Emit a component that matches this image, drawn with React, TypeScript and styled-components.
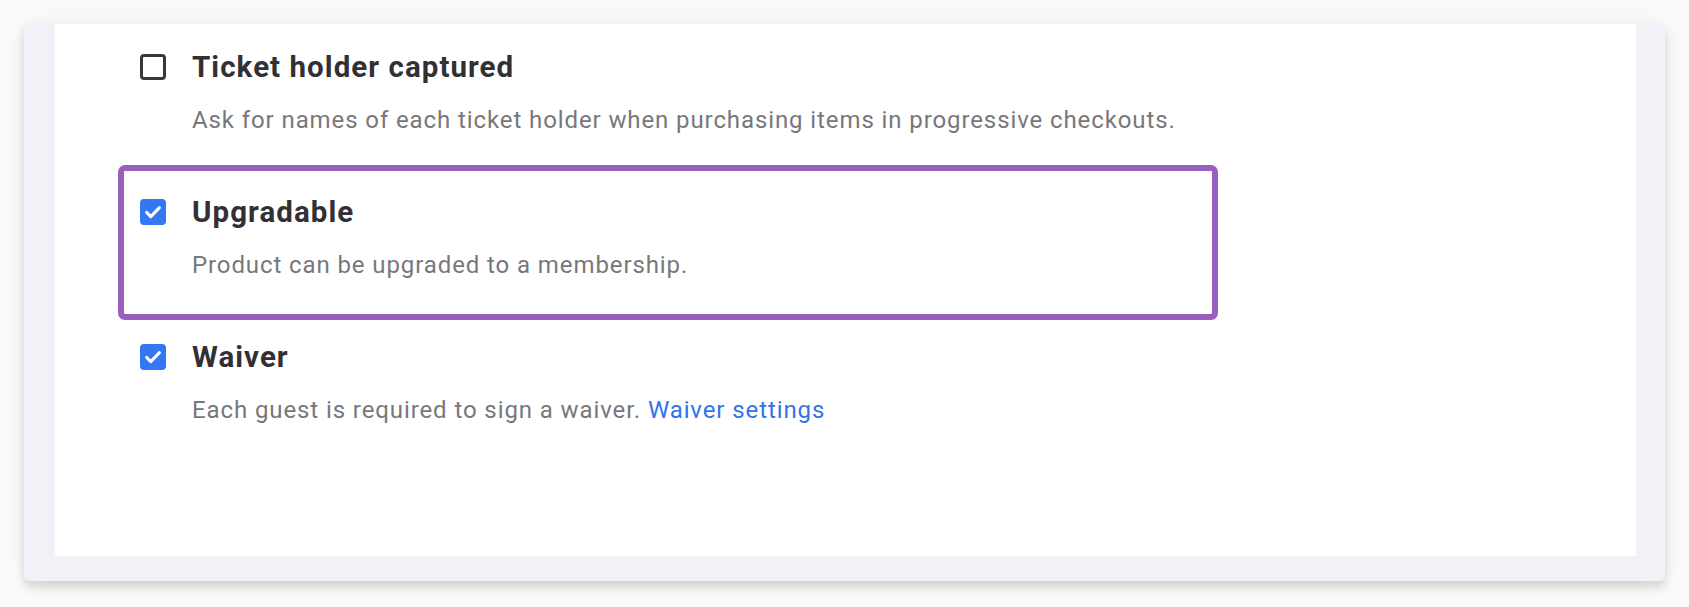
import React from "react";
import styled, { createGlobalStyle } from "styled-components";

const GlobalStyle = createGlobalStyle`
  html, body {
    margin: 0;
    padding: 0;
    background: #fafafa;
  }
  body {
    padding: 24px;
    font-family: Roboto, "Noto Sans", Arial, sans-serif;
    -webkit-font-smoothing: antialiased;
  }
`;

const Frame = styled.div`
  background: #f1f2f7;
  border-radius: 0 0 5px 5px;
  padding: 0 29px 25px 31px;
  box-shadow: 0 6px 10px rgba(0, 0, 0, 0.14), 0 0 28px rgba(0, 0, 0, 0.05);
`;

const Panel = styled.div`
  background: #ffffff;
  padding: 1px 0 96px 68px;
  display: flex;
  flex-direction: column;
`;

const OptionRow = styled.label<{ $highlighted?: boolean }>`
  box-sizing: border-box;
  width: 1090px;
  height: 145px;
  padding: 25px 0 0 17px;
  display: grid;
  grid-template-columns: 26px 1fr;
  column-gap: 26px;
  align-items: start;
  border-radius: 2px;
  outline: ${(p) => (p.$highlighted ? "6px solid #985fbd" : "none")};
  outline-offset: -1px;
`;

const BoxSlot = styled.div`
  height: 34px;
  display: flex;
  align-items: center;
`;

const Box = styled.span<{ $checked?: boolean }>`
  box-sizing: border-box;
  width: 26px;
  height: 26px;
  border-radius: 4px;
  display: flex;
  align-items: center;
  justify-content: center;
  background: ${(p) => (p.$checked ? "#3477f3" : "#ffffff")};
  border: ${(p) => (p.$checked ? "none" : "3px solid #38383c")};
`;

const TextCol = styled.div`
  display: flex;
  flex-direction: column;
  gap: 20px;
`;

const Title = styled.div`
  font-size: 29.5px;
  line-height: 34px;
  letter-spacing: 1.05px;
  font-weight: 700;
  color: #313135;
`;

const Description = styled.div`
  font-size: 24px;
  line-height: 32px;
  letter-spacing: 0.9px;
  font-weight: 400;
  color: #77777c;
`;

const Link = styled.a`
  color: #2f74ea;
  text-decoration: none;
`;

function CheckMark() {
  return (
    <svg width="26" height="26" viewBox="0 0 26 26" fill="none">
      <path
        d="M6.6 13.4 L10.8 17.6 L19.4 8.6"
        stroke="#ffffff"
        strokeWidth="3"
        strokeLinecap="round"
        strokeLinejoin="round"
      />
    </svg>
  );
}

type OptionProps = {
  checked?: boolean;
  highlighted?: boolean;
  title: string;
  children: React.ReactNode;
};

function Option({ checked, highlighted, title, children }: OptionProps) {
  return (
    <OptionRow $highlighted={highlighted}>
      <BoxSlot>
        <Box $checked={checked}>{checked && <CheckMark />}</Box>
      </BoxSlot>
      <TextCol>
        <Title>{title}</Title>
        <Description>{children}</Description>
      </TextCol>
    </OptionRow>
  );
}

export default function App() {
  return (
    <>
      <GlobalStyle />
      <Frame>
        <Panel>
          <Option title="Ticket holder captured">
            Ask for names of each ticket holder when purchasing items in progressive checkouts.
          </Option>
          <Option checked highlighted title="Upgradable">
            Product can be upgraded to a membership.
          </Option>
          <Option checked title="Waiver">
            Each guest is required to sign a waiver. <Link href="#">Waiver settings</Link>
          </Option>
        </Panel>
      </Frame>
    </>
  );
}
